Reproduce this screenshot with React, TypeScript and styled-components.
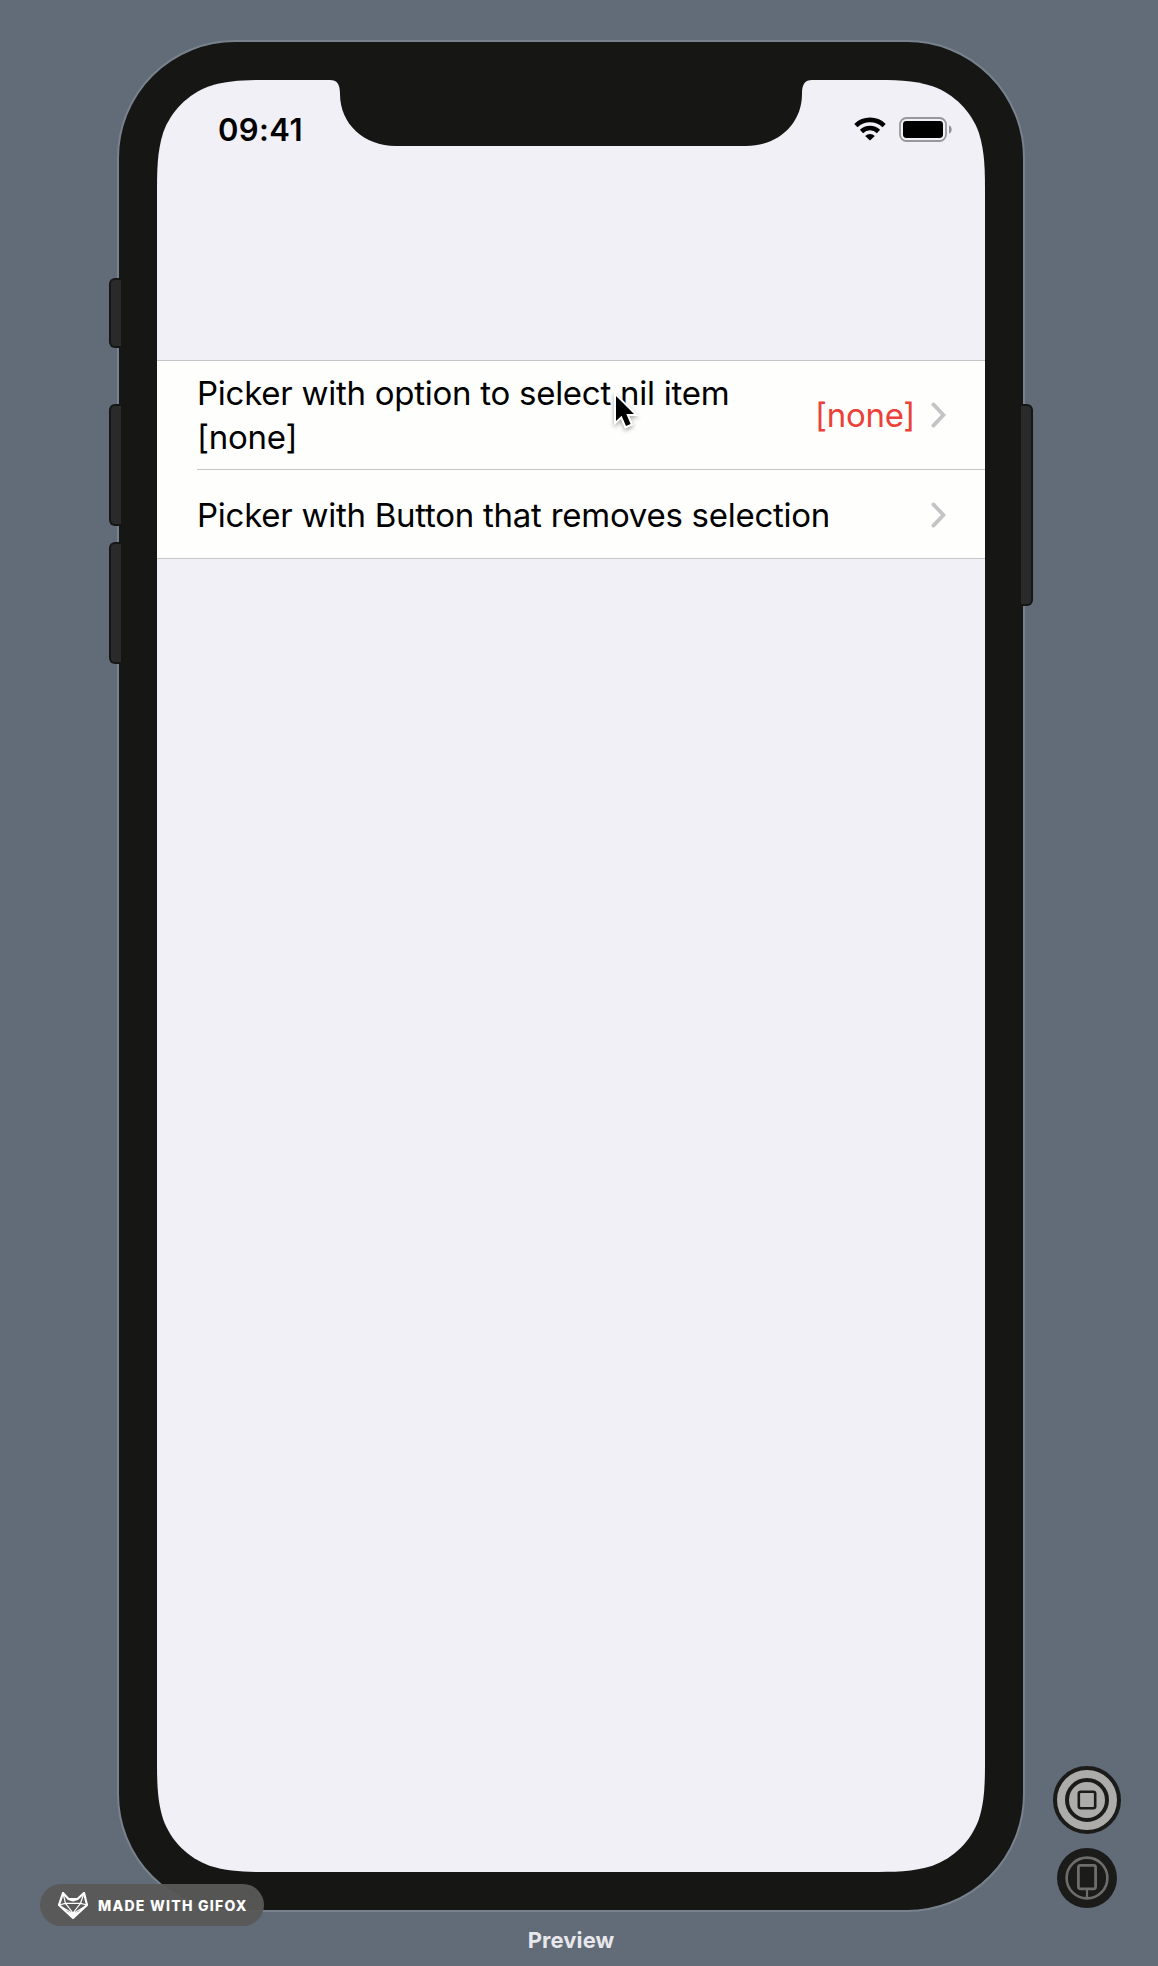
import React from "react";
import styled, { createGlobalStyle } from "styled-components";

const GlobalStyle = createGlobalStyle`
  * { box-sizing: border-box; }
  body {
    margin: 0;
    background: #616c78;
    font-family: Inter, "Liberation Sans", sans-serif;
  }
  svg { display: block; }
`;

const SCREEN_W = 828;
const SCREEN_H = 1792;

/** Outline of a rectangle with continuous ("squircle") corners. */
function continuousRect(w: number, h: number, r: number): string {
  const a = 1.4 * r;
  const b = 1.088493 * r;
  const c = 0.868407 * r;
  const d = 0.631494 * r;
  const e = 0.074911 * r;
  const f = 0.372824 * r;
  const g = 0.16906 * r;
  return [
    `M${a} 0 L${w - a} 0`,
    `C${w - b} 0 ${w - c} 0 ${w - d} ${e}`,
    `C${w - f} ${g} ${w - g} ${f} ${w - e} ${d}`,
    `C${w} ${c} ${w} ${b} ${w} ${a}`,
    `L${w} ${h - a}`,
    `C${w} ${h - b} ${w} ${h - c} ${w - e} ${h - d}`,
    `C${w - g} ${h - f} ${w - f} ${h - g} ${w - d} ${h - e}`,
    `C${w - c} ${h} ${w - b} ${h} ${w - a} ${h}`,
    `L${a} ${h}`,
    `C${b} ${h} ${c} ${h} ${d} ${h - e}`,
    `C${f} ${h - g} ${g} ${h - f} ${e} ${h - d}`,
    `C0 ${h - c} 0 ${h - b} 0 ${h - a}`,
    `L0 ${a}`,
    `C0 ${b} 0 ${c} ${e} ${d}`,
    `C${g} ${f} ${f} ${g} ${d} ${e}`,
    `C${c} 0 ${b} 0 ${a} 0 Z`,
  ].join(" ");
}

const Stage = styled.main`
  position: relative;
  width: 1158px;
  height: 1966px;
  padding: 40px 0 0 117px;
  overflow: hidden;
  background: #616c78;
`;

const Device = styled.section`
  position: relative;
  width: 908px;
  height: 1872px;
  padding: 38px;
  border: 2px solid #78828c;
  border-radius: 118px;
  background: #161614;
`;

const SideButton = styled.span<{ $side: "left" | "right"; $top: number; $length: number }>`
  position: absolute;
  top: ${(p) => p.$top}px;
  ${(p) => p.$side}: -10px;
  width: 12px;
  height: ${(p) => p.$length}px;
  border: 2px solid #151515;
  border-${(p) => (p.$side === "left" ? "right" : "left")}: 0;
  border-radius: ${(p) => (p.$side === "left" ? "6px 0 0 6px" : "0 6px 6px 0")};
  background: #2a2a2a;
`;

const Screen = styled.div`
  position: relative;
  width: ${SCREEN_W}px;
  height: ${SCREEN_H}px;
  background: #f1f0f6;
  clip-path: path("${continuousRect(SCREEN_W, SCREEN_H, 83)}");
`;

const Notch = styled.svg`
  position: absolute;
  top: 0;
  left: 171px;
`;

const StatusBar = styled.header`
  display: flex;
  justify-content: space-between;
  align-items: center;
  height: 98px;
  padding: 0 33px 0 61px;
`;

const Clock = styled.time`
  padding-top: 2px;
  font-size: 31px;
  font-weight: 600;
  line-height: 38px;
  letter-spacing: 0.4px;
  color: #000;
`;

const Indicators = styled.div`
  display: flex;
  align-items: center;
  gap: 13px;
`;

const List = styled.ul`
  margin: 182px 0 0;
  padding: 0;
  list-style: none;
  border: 1px solid #c6c5ca;
  border-width: 1px 0;
  background: #fefefd;
`;

const Row = styled.li<{ $height: number }>`
  display: flex;
  align-items: center;
  height: ${(p) => p.$height}px;
  margin-left: 40px;
  padding-right: 39px;

  & + & {
    padding-top: 1px;
    border-top: 1px solid #c6c6c8;
  }
`;

const Label = styled.span<{ $width: number }>`
  width: ${(p) => p.$width}px;
  font-size: 33px;
  line-height: 44px;
  letter-spacing: -0.26px;
  color: #000;
`;

const Value = styled.span`
  margin-left: auto;
  margin-right: 16px;
  font-size: 33px;
  line-height: 44px;
  letter-spacing: -0.3px;
  color: #ec4138;
`;

const ChevronSlot = styled.span<{ $push: boolean }>`
  margin-left: ${(p) => (p.$push ? "auto" : "0")};
`;

const Pointer = styled.svg`
  position: absolute;
  left: 452px;
  top: 310px;
  filter: drop-shadow(0 2px 2px rgba(0, 0, 0, 0.35));
`;

const Caption = styled.footer`
  width: 908px;
  padding-top: 14px;
  font-size: 22px;
  font-weight: 700;
  line-height: 28px;
  letter-spacing: 0.1px;
  text-align: center;
  color: #e8e7ec;
`;

const Watermark = styled.div`
  position: absolute;
  left: 40px;
  top: 1884px;
  display: flex;
  align-items: center;
  gap: 10px;
  width: 224px;
  height: 42px;
  padding-left: 18px;
  border-radius: 21px;
  background: rgba(88, 88, 87, 0.96);
  color: #fff;
  font-size: 14px;
  font-weight: 800;
  letter-spacing: 1.25px;
  white-space: nowrap;
`;

const Controls = styled.nav`
  position: absolute;
  left: 1053px;
  top: 1766px;
  display: flex;
  flex-direction: column;
  align-items: center;
  gap: 14px;
`;

const WifiIcon = () => (
  <svg width="32" height="24" viewBox="0 0 32 24" fill="none" stroke="#000" strokeWidth="4.6">
    <path d="M1.9 8.6a20.2 20.2 0 0 1 28.2 0" />
    <path d="M7.5 14.5a12.2 12.2 0 0 1 17 0" />
    <path d="M16 23.6l-4.8-4.7a6.8 6.8 0 0 1 9.6 0z" fill="#000" stroke="none" />
  </svg>
);

const BatteryIcon = () => (
  <svg width="53" height="25" viewBox="0 0 53 25">
    <rect x="1" y="1" width="46" height="23" rx="6.5" fill="none" stroke="#98979b" strokeWidth="1.8" />
    <rect x="4" y="4" width="40" height="17" rx="3.4" fill="#000" />
    <path d="M50 8.3c3.6 1.4 3.6 7 0 8.4z" fill="#929195" />
  </svg>
);

const Chevron = () => (
  <svg width="15" height="26" viewBox="0 0 15 26" fill="none" stroke="#c4c4c6" strokeWidth="3.8" strokeLinecap="round">
    <path d="M2.4 2.4L12.4 13L2.4 23.6" />
  </svg>
);

const FoxIcon = () => (
  <svg width="30" height="27" viewBox="0 0 30 27" fill="none" stroke="#fff" strokeWidth="2.2" strokeLinejoin="round">
    <path d="M5 1L10.5 7L19.5 7L26 1L29 13L15 26L1 13Z" />
    <path d="M10.5 7L15 8.5L19.5 7" />
    <path d="M1 13L7.5 11.3H22.5L29 13M7.5 11.3L15 21L22.5 11.3M5 1L7.5 11.3M26 1L22.5 11.3M3 14.5L14 21M27 14.5L16 21" strokeWidth="1.2" />
    <path d="M10.5 20.5L15 21.5L19.5 20.5L15 26Z" fill="#fff" strokeWidth="1" />
  </svg>
);

const LiveIcon = () => (
  <svg width="68" height="68" viewBox="0 0 68 68" fill="none" stroke="#1b1b1a">
    <circle cx="34" cy="34" r="32" fill="#acacab" strokeWidth="4" />
    <circle cx="34" cy="34" r="20" strokeWidth="4" />
    <rect x="25.8" y="25.8" width="16.4" height="16.4" rx="2" strokeWidth="2.6" />
  </svg>
);

const DeviceIcon = () => (
  <svg width="60" height="60" viewBox="0 0 60 60" fill="none" stroke="#6d6d6c">
    <circle cx="30" cy="30" r="30" fill="#1b1b1a" stroke="none" />
    <circle cx="30" cy="30" r="20.4" strokeWidth="2.6" />
    <rect x="21.4" y="17.4" width="17.2" height="23.4" rx="2" strokeWidth="2.8" fill="#1b1b1a" />
    <path d="M30 42v9" strokeWidth="2.2" />
  </svg>
);

export default function App() {
  return (
    <Stage>
      <GlobalStyle />
      <Device>
        <Screen>
          <StatusBar>
            <Clock>09:41</Clock>
            <Indicators>
              <WifiIcon />
              <BatteryIcon />
            </Indicators>
          </StatusBar>
          <List>
            <Row $height={108}>
              <Label $width={560}>Picker with option to select nil item [none]</Label>
              <Value>[none]</Value>
              <ChevronSlot $push={false}><Chevron /></ChevronSlot>
            </Row>
            <Row $height={89}>
              <Label $width={660}>Picker with Button that removes selection</Label>
              <ChevronSlot $push><Chevron /></ChevronSlot>
            </Row>
          </List>
          <Notch width="486" height="67" viewBox="0 0 486 67" fill="#161614">
            <path d="M0 -2V0H2C9 0 12 4 12 14C12 44 36 66 68 66H418C450 66 474 44 474 14C474 4 477 0 484 0H486V-2Z" />
          </Notch>
          <Pointer width="34" height="44" viewBox="0 0 34 44">
            <path
              d="M7 6V31L12.6 25.8L17 36L21.6 34L17.3 24H25Z"
              fill="#000"
              stroke="#fff"
              strokeWidth="4"
              paintOrder="stroke"
              strokeLinejoin="miter"
            />
          </Pointer>
        </Screen>
        <SideButton $side="left" $top={236} $length={70} />
        <SideButton $side="left" $top={362} $length={122} />
        <SideButton $side="left" $top={500} $length={122} />
        <SideButton $side="right" $top={362} $length={202} />
      </Device>
      <Caption>Preview</Caption>
      <Watermark>
        <FoxIcon />
        MADE WITH GIFOX
      </Watermark>
      <Controls>
        <LiveIcon />
        <DeviceIcon />
      </Controls>
    </Stage>
  );
}
